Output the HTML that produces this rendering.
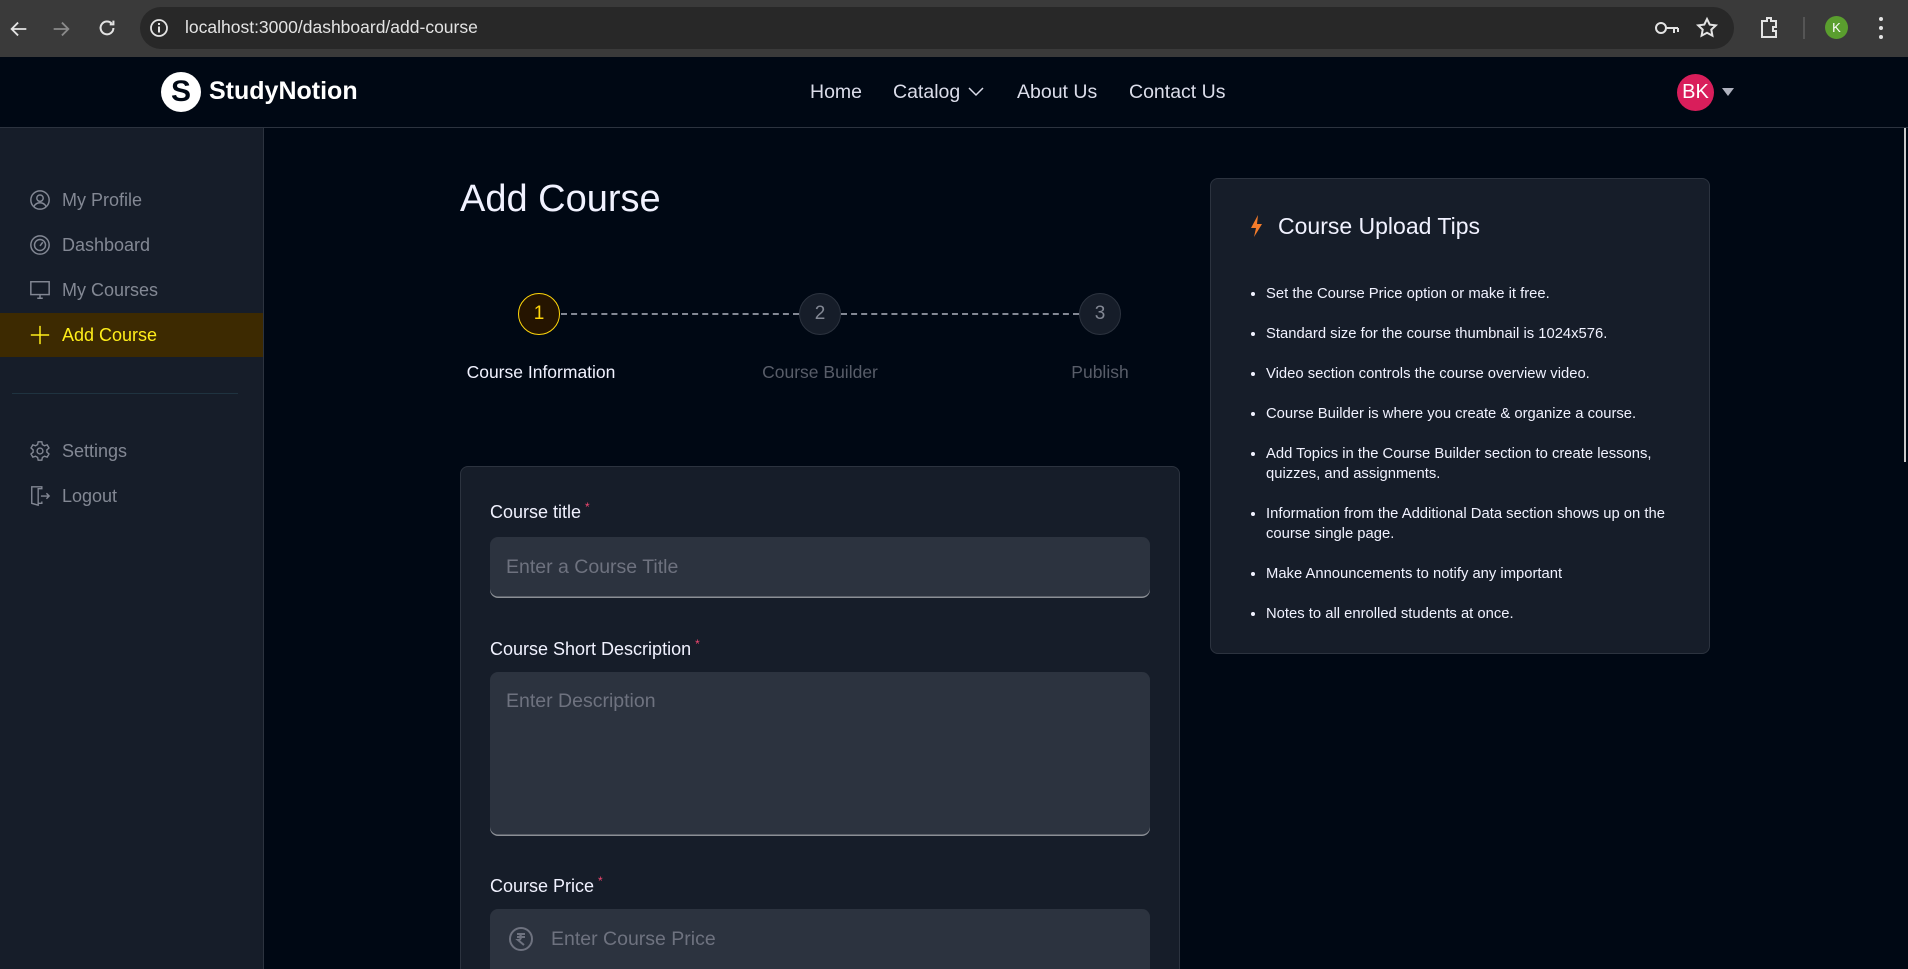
<!DOCTYPE html>
<html><head><meta charset="utf-8">
<style>
*{box-sizing:border-box;margin:0;padding:0}
html,body{width:1908px;height:969px;overflow:hidden}
body{background:#000814;font-family:"Liberation Sans",Arial,sans-serif;position:relative;color:#F1F2FF}
.abs{position:absolute}
.chrome{left:0;top:0;width:1908px;height:57px;background:#3a3a3a}
.url{left:140px;top:7px;width:1594px;height:42px;background:#282828;border-radius:21px}
.nav{left:0;top:57px;width:1908px;height:71px;background:#000814;border-bottom:1px solid #2C333F}
.side{left:0;top:128px;width:264px;height:841px;background:#161D29;border-right:1px solid #2C333F}
.si{position:absolute;left:0;width:263px;height:44px;display:flex;align-items:center;padding-left:29px;color:#838894;font-size:18px}
.si svg{margin-right:11px}
.lbl{font-size:18px;color:#F1F2FF}
.lbl sup{color:#EF476F;font-size:12px;margin-left:4px}
.inp{background:#2C333F;border-radius:8px;box-shadow:inset 0 -1.5px 0 rgba(255,255,255,0.45);color:#6E727F;font-size:19.5px;padding-left:16px}
.tips li{margin-bottom:20px;line-height:20px}
</style></head><body>
<div class="abs chrome"></div>
<div class="abs url"></div>
<svg class="abs" style="left:8px;top:18px" width="22" height="22" viewBox="0 0 24 24" fill="none" stroke="#e3e3e3" stroke-width="2"><path d="M20 12H5M11 5l-7 7 7 7"/></svg>
<svg class="abs" style="left:50px;top:18px" width="22" height="22" viewBox="0 0 24 24" fill="none" stroke="#8a8a8a" stroke-width="2"><path d="M4 12h15M13 5l7 7-7 7"/></svg>
<svg class="abs" style="left:96px;top:17px" width="22" height="22" viewBox="0 0 24 24" fill="none" stroke="#e3e3e3" stroke-width="2.2"><path d="M19 12a7 7 0 1 1-2-5M19 4v4h-4"/></svg>
<svg class="abs" style="left:149px;top:18px" width="20" height="20" viewBox="0 0 20 20"><circle cx="10" cy="10" r="8" fill="none" stroke="#e3e3e3" stroke-width="1.8"/><rect x="9" y="8.5" width="2" height="6" fill="#e3e3e3"/><rect x="9" y="5" width="2" height="2" fill="#e3e3e3"/></svg>
<div class="abs" style="left:185px;top:17px;font-size:17.5px;color:#e3e3e3">localhost:3000/dashboard/add-course</div>
<svg class="abs" style="left:1654px;top:18px" width="26" height="20" viewBox="0 0 26 20" fill="none" stroke="#e3e3e3" stroke-width="2"><circle cx="7" cy="10" r="5"/><path d="M12 10h12M20 10v5M24 10v4"/></svg>
<svg class="abs" style="left:1695px;top:16px" width="24" height="24" viewBox="0 0 24 24" fill="none" stroke="#e3e3e3" stroke-width="2"><path d="M12 3l2.7 5.6 6.1.8-4.5 4.2 1.1 6.1L12 16.8 6.6 19.7l1.1-6.1L3.2 9.4l6.1-.8z"/></svg>
<svg class="abs" style="left:1757px;top:15px" width="24" height="26" viewBox="0 0 24 26" fill="none" stroke="#e3e3e3" stroke-width="2"><path d="M5 6h5V3h4v3h5v6h-3v4h3v6H5z"/></svg>
<div class="abs" style="left:1803px;top:17px;width:2px;height:22px;background:#555"></div>
<div class="abs" style="left:1825px;top:16px;width:23px;height:23px;border-radius:50%;background:#5a9e2e;color:#fff;font-size:13px;text-align:center;line-height:23px">K</div>
<div class="abs" style="left:1879px;top:17px;width:4px;height:22px;display:flex;flex-direction:column;justify-content:space-between"><i style="width:4px;height:4px;border-radius:50%;background:#e3e3e3"></i><i style="width:4px;height:4px;border-radius:50%;background:#e3e3e3"></i><i style="width:4px;height:4px;border-radius:50%;background:#e3e3e3"></i></div>

<div class="abs nav"></div>
<div class="abs" style="left:161px;top:72px;width:40px;height:40px;border-radius:50%;background:#fff;color:#000814;font-weight:bold;font-size:30px;text-align:center;line-height:40px">S</div>
<div class="abs" style="left:209px;top:77px;font-size:25px;font-weight:bold;color:#fff">StudyNotion</div>
<div class="abs" style="left:810px;top:81px;font-size:19.5px;color:#DBDDEA">Home</div>
<div class="abs" style="left:893px;top:81px;font-size:19.5px;color:#DBDDEA">Catalog</div>
<svg class="abs" style="left:967px;top:86px" width="18" height="12" viewBox="0 0 18 12" fill="none" stroke="#DBDDEA" stroke-width="1.5"><path d="M2 2l7 7 7-7"/></svg>
<div class="abs" style="left:1017px;top:81px;font-size:19.5px;color:#DBDDEA">About Us</div>
<div class="abs" style="left:1129px;top:81px;font-size:19.5px;color:#DBDDEA">Contact Us</div>
<div class="abs" style="left:1677px;top:74px;width:37px;height:37px;border-radius:50%;background:#D91E5B;color:#fff;font-size:20px;text-align:center;line-height:37px">BK</div>
<svg class="abs" style="left:1721px;top:87px" width="14" height="10" viewBox="0 0 14 10"><path d="M1 1h12L7 9z" fill="#AFB2BF"/></svg>

<div class="abs side"></div>
<div class="si" style="top:178px"><svg width="22" height="22" viewBox="0 0 24 24" fill="none" stroke="#838894" stroke-width="1.6"><circle cx="12" cy="12" r="10"/><circle cx="12" cy="10" r="3.5"/><path d="M5.5 19c1.5-3 4-4 6.5-4s5 1 6.5 4"/></svg>My Profile</div>
<div class="si" style="top:223px"><svg width="22" height="22" viewBox="0 0 24 24" fill="none" stroke="#838894" stroke-width="1.6"><circle cx="12" cy="12" r="10"/><circle cx="12" cy="12" r="6"/><path d="M12 13l3-4"/></svg>Dashboard</div>
<div class="si" style="top:268px"><svg width="22" height="22" viewBox="0 0 24 24" fill="none" stroke="#838894" stroke-width="1.6"><rect x="2" y="3" width="20" height="14"/><path d="M9 21h6M12 17v4"/></svg>My Courses</div>
<div class="si" style="top:313px;background:#3D2A01;color:#FFEE1A"><svg width="22" height="22" viewBox="0 0 24 24" fill="none" stroke="#FFEE1A" stroke-width="1.6"><path d="M12 2v20M2 12h20"/></svg>Add Course</div>
<div class="abs" style="left:12px;top:393px;width:226px;height:1px;background:#1f3340"></div>
<div class="si" style="top:429px"><svg width="22" height="22" viewBox="0 0 24 24" fill="none" stroke="#838894" stroke-width="1.5"><circle cx="12" cy="12" r="3.2"/><path d="M10 2h4l.6 3 2.3 1.3 2.9-1 2 3.4-2.3 2v2.6l2.3 2-2 3.4-2.9-1-2.3 1.3-.6 3h-4l-.6-3-2.3-1.3-2.9 1-2-3.4 2.3-2v-2.6l-2.3-2 2-3.4 2.9 1L9.4 5z"/></svg>Settings</div>
<div class="si" style="top:474px"><svg width="22" height="22" viewBox="0 0 24 24" fill="none" stroke="#838894" stroke-width="1.5"><path d="M14 4V2H3v18l7 2V4zM14 18v2h-4M13 12h9M19 9l3 3-3 3"/></svg>Logout</div>

<div class="abs" style="left:460px;top:178px;font-size:38px;color:#F1F2FF">Add Course</div>
<div class="abs" style="left:561px;top:313px;width:238px;border-top:2px dashed #838894"></div>
<div class="abs" style="left:841px;top:313px;width:238px;border-top:2px dashed #838894"></div>
<div class="abs" style="left:518px;top:293px;width:42px;height:42px;border-radius:50%;background:#251400;border:1.5px solid #FFD60A;color:#FFD60A;font-size:19px;text-align:center;line-height:39px">1</div>
<div class="abs" style="left:799px;top:293px;width:42px;height:42px;border-radius:50%;background:#161D29;border:1.5px solid #2C333F;color:#838894;font-size:19px;text-align:center;line-height:39px">2</div>
<div class="abs" style="left:1079px;top:293px;width:42px;height:42px;border-radius:50%;background:#161D29;border:1.5px solid #2C333F;color:#838894;font-size:19px;text-align:center;line-height:39px">3</div>
<div class="abs" style="left:441px;top:362px;width:200px;text-align:center;font-size:17.5px;color:#F1F2FF">Course Information</div>
<div class="abs" style="left:720px;top:362px;width:200px;text-align:center;font-size:17.5px;color:#585D69">Course Builder</div>
<div class="abs" style="left:1000px;top:362px;width:200px;text-align:center;font-size:17.5px;color:#585D69">Publish</div>

<div class="abs" style="left:460px;top:466px;width:720px;height:510px;background:#161D29;border:1px solid #2C333F;border-radius:8px"></div>
<div class="abs lbl" style="left:490px;top:500px">Course title<sup>*</sup></div>
<div class="abs inp" style="left:490px;top:537px;width:660px;height:61px;line-height:61px">Enter a Course Title</div>
<div class="abs lbl" style="left:490px;top:637px">Course Short Description<sup>*</sup></div>
<div class="abs inp" style="left:490px;top:672px;width:660px;height:164px;padding-top:18px">Enter Description</div>
<div class="abs lbl" style="left:490px;top:874px">Course Price<sup>*</sup></div>
<div class="abs inp" style="left:490px;top:909px;width:660px;height:70px;padding-left:61px;line-height:60px">Enter Course Price</div>
<svg class="abs" style="left:508px;top:926px" width="26" height="26" viewBox="0 0 26 26" fill="none" stroke="#6E727F" stroke-width="2"><circle cx="13" cy="13" r="11"/><path d="M9 8h8M9 11h8M10 8c4 0 4 6 0 6l6 5"/></svg>

<div class="abs" style="left:1210px;top:178px;width:500px;height:476px;background:#161D29;border:1px solid #2C333F;border-radius:8px"></div>
<svg class="abs" style="left:1248px;top:214px" width="16" height="24" viewBox="0 0 16 24"><path d="M10 1L3 14h5l-2 9 8-13H9z" fill="#F37B2A"/></svg>
<div class="abs" style="left:1278px;top:213px;font-size:23px;color:#F1F2FF">Course Upload Tips</div>
<ul class="abs tips" style="left:1266px;top:284px;width:425px;font-size:14.8px;color:#F1F2FF">
<li>Set the Course Price option or make it free.</li>
<li>Standard size for the course thumbnail is 1024x576.</li>
<li>Video section controls the course overview video.</li>
<li>Course Builder is where you create &amp; organize a course.</li>
<li>Add Topics in the Course Builder section to create lessons, quizzes, and assignments.</li>
<li>Information from the Additional Data section shows up on the course single page.</li>
<li>Make Announcements to notify any important</li>
<li>Notes to all enrolled students at once.</li>
</ul>
<div class="abs" style="left:1904px;top:128px;width:2px;height:334px;background:#c8c8c8"></div>
</body></html>
